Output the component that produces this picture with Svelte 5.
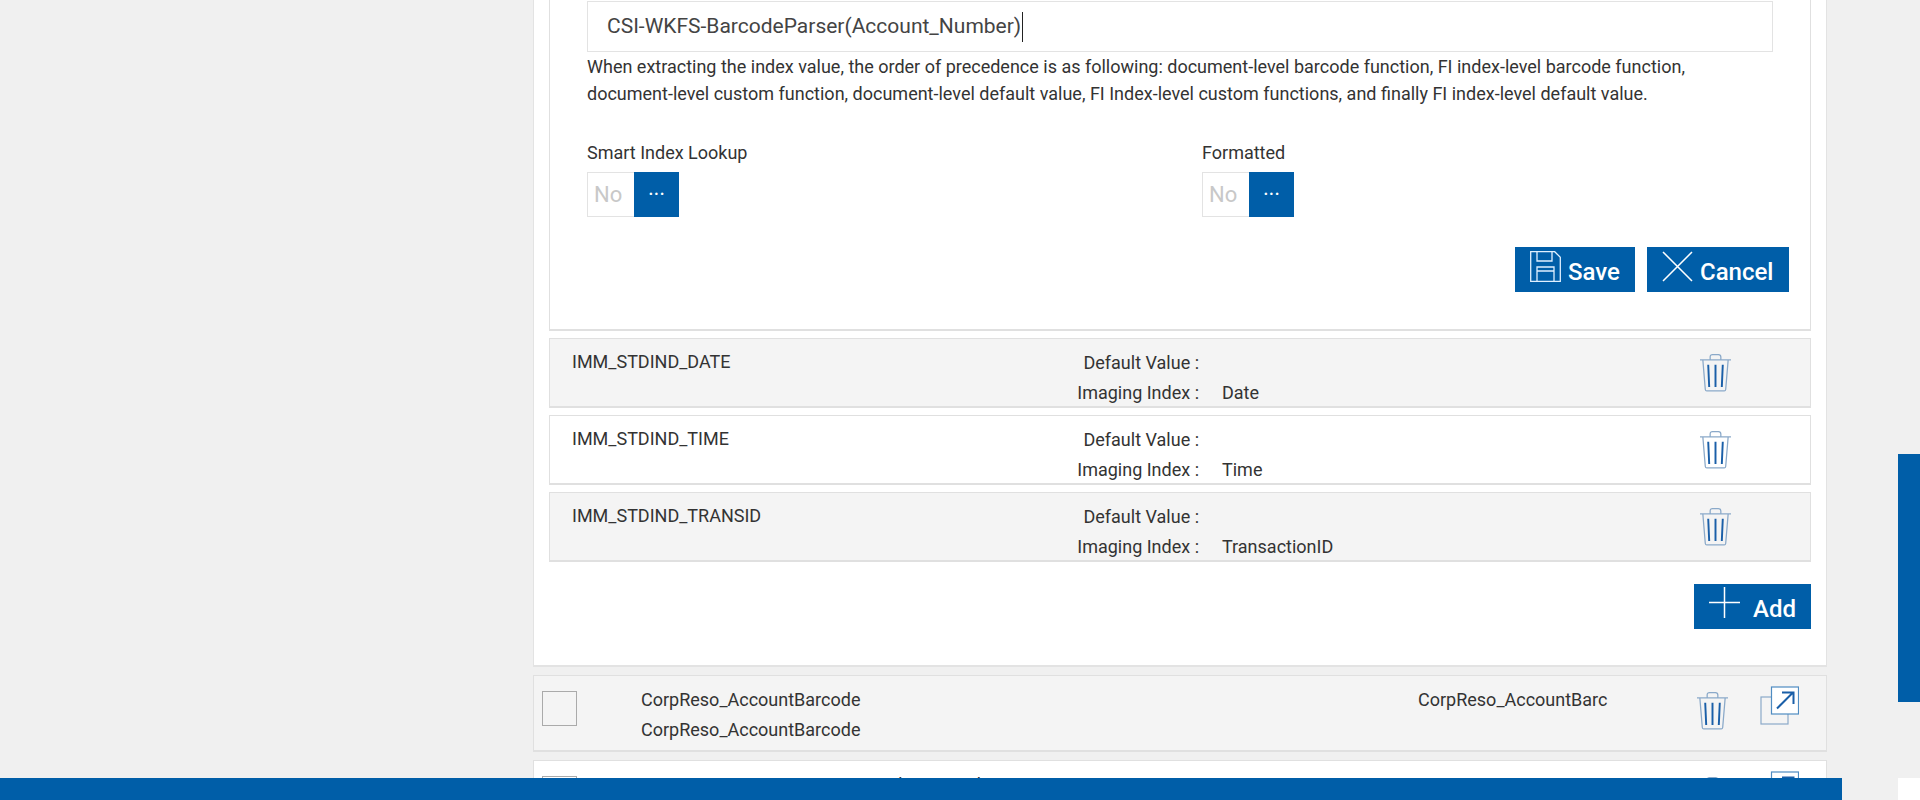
<script>
  const rows = [
    { name: 'IMM_STDIND_DATE', idx: 'Date' },
    { name: 'IMM_STDIND_TIME', idx: 'Time' },
    { name: 'IMM_STDIND_TRANSID', idx: 'TransactionID' }
  ];
  const docs = [
    { a: 'CorpReso_AccountBarcode', b: 'CorpReso_AccountBarcode', c: 'CorpReso_AccountBarc' },
    { a: 'CorporateReso_CIFTIN_FINNumberBarcode2', b: '', c: 'CorporateReso_CIFTIN_C' }
  ];
</script>

{#snippet trash()}
  <svg class="trash" viewBox="0 0 34 39" fill="none">
    <path d="M1 6.500h32M11.500 6V3.500Q11.500 1 14 1h6q2.500 0 2.500 2.500V6M4 7l2.500 30q.2 1.500 1.500 1.500h18q1.300 0 1.500-1.500L30 7" stroke="#8aa9c9" stroke-width="1.300"/>
    <path d="M9.500 11.500l1 23M17 11.500v23M24.500 11.500l-1 23" stroke="#1a5fa8" stroke-width="2"/>
  </svg>
{/snippet}

<div class="page">
  <section class="outer">
    <div class="editor">
      <div class="field">CSI-WKFS-BarcodeParser(Account_Number)<span class="caret"></span></div>
      <p class="hint">When extracting the index value, the order of precedence is as following: document-level barcode function, FI index-level barcode function, document-level custom function, document-level default value, FI Index-level custom functions, and finally FI index-level default value.</p>
      <div class="toggles">
        <div class="tcol">
          <div class="tlabel">Smart Index Lookup</div>
          <div class="toggle"><span class="no">No</span><span class="dots">···</span></div>
        </div>
        <div class="tcol">
          <div class="tlabel">Formatted</div>
          <div class="toggle"><span class="no">No</span><span class="dots">···</span></div>
        </div>
      </div>
      <div class="actions">
        <button class="btn save">
          <svg class="ic" viewBox="0 0 31 31" fill="none" stroke="#dff0ff" stroke-width="1.300">
            <path d="M.7.7h24l5.600 5.600v24H.7z"/><path d="M7 1v9h15V1M7 30V16h17v14M7 20h17"/>
          </svg>
          <span class="lbl">Save</span>
        </button>
        <button class="btn cancel">
          <svg class="ic" viewBox="0 0 31 31" fill="none" stroke="#fff" stroke-width="1.500">
            <path d="M1 1l29 29M30 1L1 30"/>
          </svg>
          <span class="lbl">Cancel</span>
        </button>
      </div>
    </div>

    {#each rows as r, i}
      <div class="irow" class:alt={i % 2 === 0}>
        <div class="iname">{r.name}</div>
        <div class="ilabels"><span>Default Value :</span><span>Imaging Index :</span></div>
        <div class="ivalues"><span>&nbsp;</span><span>{r.idx}</span></div>
        <div class="itrash">{@render trash()}</div>
      </div>
    {/each}

    <div class="addwrap">
      <button class="btn add">
        <svg class="ic" viewBox="0 0 31 31" fill="none" stroke="#fff" stroke-width="1.500"><path d="M15.500 0v31M0 15.500h31"/></svg>
        <span class="lbl">Add</span>
      </button>
    </div>
  </section>

  {#each docs as d, i}
    <div class="doc" class:alt={i === 0}>
      <span class="check"></span>
      <div class="dnames"><span>{d.a}</span><span>{d.b}</span></div>
      <div class="dcode">{d.c}</div>
      <div class="dtrash">{@render trash()}</div>
      <svg class="open" viewBox="0 0 39 39" fill="none">
        <rect x="1" y="11" width="27" height="27" stroke="#8aa9c9" stroke-width="1.200"/>
        <rect x="11.500" y="1" width="27" height="27" fill="#fff" stroke="#4f8cc2" stroke-width="1.200"/>
        <path d="M17 22.500L33 6.500M22 6.500h11.500V18" stroke="#1a5fa8" stroke-width="2"/>
      </svg>
    </div>
  {/each}
</div>

<div class="scroll"></div>
<div class="corner"></div>
<footer class="foot"></footer>

<style>
  :global(body) {
    margin: 0;
    background: #f0f0f0;
    overflow: hidden;
    font-family: Roboto, "Liberation Sans", sans-serif;
    color: #333;
  }
  .page {
    width: 1294px;
    margin-left: 533px;
    height: 800px;
    overflow: hidden;
  }
  .outer {
    box-sizing: border-box;
    height: 667px;
    padding: 0 15px;
    background: #fff;
    border: solid #e3e3e3;
    border-width: 0 1px 2px;
  }
  .editor {
    box-sizing: border-box;
    height: 331px;
    padding: 1px 37px 0;
    border: 1px solid #e0e0e0;
    border-top: 0;
    border-bottom-width: 2px;
  }
  .field {
    box-sizing: border-box;
    width: 1186px;
    height: 51px;
    padding: 0 19px;
    border: 1px solid #e3e3e3;
    font-size: 21px;
    line-height: 49px;
    color: #444;
    display: flex;
    align-items: center;
    white-space: nowrap;
  }
  .caret {
    display: inline-block;
    width: 1px;
    height: 30px;
    background: #222;
    margin-left: 1px;
  }
  .hint {
    margin: 1px 0 0;
    font-size: 18px;
    line-height: 27px;
    color: #333;
    width: 1186px;
  }
  .toggles {
    display: flex;
    margin-top: 34px;
  }
  .tcol {
    flex: 0 0 615px;
  }
  .tlabel {
    font-size: 18px;
    line-height: 24px;
    height: 31px;
  }
  .toggle {
    display: flex;
    box-sizing: border-box;
    width: 92px;
    height: 45px;
    border: 1px solid #e3e3e3;
  }
  .no {
    width: 47px;
    font-size: 22px;
    line-height: 43px;
    color: #c8c8c8;
    padding-left: 6px;
    box-sizing: border-box;
  }
  .dots {
    flex: 1;
    margin: -1px;
    background: #005ea8;
    color: #fff;
    text-align: center;
    font-size: 22px;
    font-weight: 400;
    line-height: 45px;
  }
  .actions {
    display: flex;
    justify-content: flex-end;
    gap: 12px;
    margin-top: 30px;
    margin-right: -16px;
  }
  .btn {
    display: flex;
    align-items: center;
    height: 45px;
    border: 0;
    padding: 0;
    background: #005ea8;
    color: #fff;
    font-family: inherit;
    font-size: 24px;
    font-weight: 500;
  }
  .lbl {
    padding-top: 5px;
  }
  .ic {
    width: 31px;
    height: 31px;
    margin-top: -7px;
    flex: none;
  }
  .save { width: 120px; padding-left: 15px; gap: 7px; }
  .cancel { width: 142px; padding-left: 15px; gap: 7px; }
  .add { width: 117px; padding-left: 15px; gap: 13px; }
  .add .ic { margin-top: -8px; }
  .irow {
    box-sizing: border-box;
    height: 70px;
    margin-top: 7px;
    border: 1px solid #e0e0e0;
    border-bottom-width: 2px;
    background: #fff;
    font-size: 18px;
    display: flex;
    color: #333;
  }
  .irow.alt { background: #f4f4f4; }
  .iname {
    flex: none;
    width: 649px;
    padding-left: 22px;
    line-height: 45px;
    box-sizing: border-box;
  }
  .ilabels, .ivalues {
    display: flex;
    flex-direction: column;
    padding-top: 9px;
    line-height: 30px;
  }
  .ilabels {
    flex: 0 0 0;
    min-width: 0;
    align-items: flex-end;
    white-space: nowrap;
  }
  .ivalues {
    flex: none;
    width: 500px;
    padding-left: 23px;
    box-sizing: border-box;
  }
  .itrash { display: flex; padding-top: 14px; }
  .trash {
    width: 33px;
    height: 39px;
    flex: none;
  }
  .addwrap {
    display: flex;
    justify-content: flex-end;
    margin-top: 22px;
  }
  .doc {
    display: flex;
    box-sizing: border-box;
    height: 77px;
    margin-top: 8px;
    padding-left: 8px;
    border: 1px solid #e0e0e0;
    border-bottom-width: 2px;
    background: #fff;
    font-size: 18px;
    color: #333;
  }
  .doc.alt { background: #f4f4f4; }
  .check {
    box-sizing: border-box;
    flex: none;
    width: 35px;
    height: 35px;
    margin-top: 15px;
    border: 1px solid #aaa;
  }
  .dnames {
    display: flex;
    flex-direction: column;
    flex: none;
    width: 777px;
    margin-left: 64px;
    padding-top: 9px;
    line-height: 30px;
    white-space: nowrap;
  }
  .dcode {
    flex: none;
    width: 278px;
    padding-top: 9px;
    line-height: 30px;
    white-space: nowrap;
  }
  .dtrash { padding-top: 15px; width: 34px; flex: none; }
  .open {
    width: 39px;
    height: 39px;
    flex: none;
    margin: 10px 0 0 30px;
  }
  .scroll {
    position: fixed;
    left: 1898px;
    top: 454px;
    width: 22px;
    height: 248px;
    background: #005ea8;
  }
  .corner {
    position: fixed;
    left: 1898px;
    top: 778px;
    width: 22px;
    height: 22px;
    background: #fff;
  }
  .foot {
    position: fixed;
    left: 0;
    bottom: 0;
    width: 1842px;
    height: 22px;
    background: #005ea8;
  }
</style>
